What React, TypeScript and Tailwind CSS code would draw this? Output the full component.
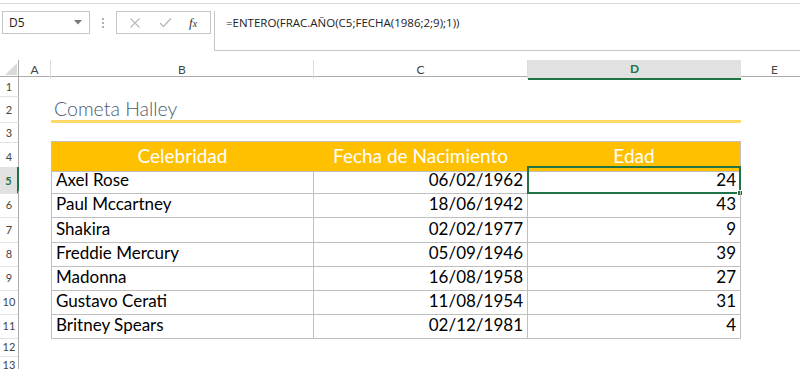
import React from "react";

const COLS = "grid-cols-[19px_32px_263px_214px_213px_1fr]";

const data: [string, string, string][] = [
  ["Axel Rose", "06/02/1962", "24"],
  ["Paul Mccartney", "18/06/1942", "43"],
  ["Shakira", "02/02/1977", "9"],
  ["Freddie Mercury", "05/09/1946", "39"],
  ["Madonna", "16/08/1958", "27"],
  ["Gustavo Cerati", "11/08/1954", "31"],
  ["Britney Spears", "02/12/1981", "4"],
];

const rowH = ["h-[24px]", "h-[25px]", "h-[24px]", "h-[24px]", "h-[24px]", "h-[24px]", "h-[25px]"];

function RowHead({ n, active }: { n: number; active?: boolean }) {
  return (
    <div
      className={
        "flex items-center justify-center pt-[2px] text-[11px] border-b border-b-[#e3e3e3] " +
        (active
          ? "bg-[#e1e1e1] text-[#217346] font-bold border-r-2 border-r-[#217346]"
          : "text-[#444] border-r border-r-[#ababab]")
      }
    >
      {n}
    </div>
  );
}

export default function App() {
  return (
    <div className="w-[800px] h-[369px] overflow-hidden bg-white relative font-['Lato',sans-serif] text-black">
      {/* formula bar */}
      <div className="h-[60px] pt-[3px]">
        <div className="h-[48px] border-t border-[#d8d8d8] flex items-start pt-[7px]">
          <div className="ml-[2px] w-[88px] h-[23px] border border-[#c6c6c6] flex items-center justify-between pl-[6px] pr-[7px] font-['Open_Sans',sans-serif] text-[12px] text-[#222]">
            <span>D5</span>
            <svg width="8" height="5" viewBox="0 0 8 5">
              <path d="M0 0 L8 0 L4 4.5 Z" fill="#777" />
            </svg>
          </div>
          <div className="w-[26px] h-[23px] flex flex-col items-center justify-center gap-[2px]">
            <span className="w-[2px] h-[2px] bg-[#b0b0b0]" />
            <span className="w-[2px] h-[2px] bg-[#b0b0b0]" />
            <span className="w-[2px] h-[2px] bg-[#b0b0b0]" />
          </div>
          <div className="w-[95px] h-[23px] border border-[#c6c6c6] flex items-center">
            <svg width="12" height="12" viewBox="0 0 12 12" className="ml-[12px]">
              <path d="M1.5 1.5 L10.5 10.5 M10.5 1.5 L1.5 10.5" stroke="#b8b8b8" strokeWidth="1.1" />
            </svg>
            <svg width="13" height="11" viewBox="0 0 13 11" className="ml-[18px]">
              <path d="M1 6 L4.5 9.5 L12 1.5" stroke="#b8b8b8" strokeWidth="1.3" fill="none" />
            </svg>
            <span className="ml-[17px] font-['Liberation_Serif',serif] italic text-[13px] text-[#333] leading-none">
              f<span className="text-[10px]">x</span>
            </span>
          </div>
          <div className="ml-[3px] flex-1 h-[40px] border-l border-b border-[#c6c6c6] pl-[11px] pt-[3px] font-['Open_Sans',sans-serif] text-[11.5px] text-[#222]">
            =ENTERO(FRAC.AÑO(C5;FECHA(1986;2;9);1))
          </div>
        </div>
      </div>

      {/* column headers */}
      <div className={"grid h-[17px] border-b border-[#ababab] text-[12px] text-[#444] " + COLS}>
        <div className="border-r border-[#ababab] relative">
          <svg width="12" height="12" viewBox="0 0 12 12" className="absolute left-[5px] top-[3px]">
            <path d="M12 0 L12 12 L0 12 Z" fill="#dadada" />
          </svg>
        </div>
        <div className="flex items-center justify-center border-r border-[#dcdcdc]">A</div>
        <div className="flex items-center justify-center border-r border-[#dcdcdc]">B</div>
        <div className="flex items-center justify-center border-r border-[#dcdcdc]">C</div>
        <div className="flex items-center justify-center bg-[#e1e1e1] text-[#217346] font-bold border-b-2 border-[#217346] -mb-px">D</div>
        <div className="flex items-center pl-[30px]">E</div>
      </div>

      {/* row 1 */}
      <div className={"grid h-[20px] " + COLS}>
        <RowHead n={1} />
      </div>
      {/* row 2 title */}
      <div className={"grid h-[26px] " + COLS}>
        <RowHead n={2} />
        <div />
        <div className="col-span-3 border-b-[3px] border-[#ffd966] flex items-end pl-[3px] pb-[2px] text-[19.5px] text-[#4a5a70] leading-none font-light">
          Cometa Halley
        </div>
      </div>
      {/* row 3 */}
      <div className={"grid h-[18px] " + COLS}>
        <RowHead n={3} />
      </div>
      {/* row 4 header */}
      <div className={"grid h-[26px] " + COLS}>
        <RowHead n={4} />
        <div />
        <div className="bg-[#ffc000] border border-[#bfbfbf] text-white text-[19px] flex items-center justify-center">Celebridad</div>
        <div className="bg-[#ffc000] border-y border-r border-[#bfbfbf] text-white text-[19px] flex items-center justify-center">Fecha de Nacimiento</div>
        <div className="bg-[#ffc000] border-y border-r border-[#bfbfbf] text-white text-[19px] flex items-center justify-center">Edad</div>
      </div>
      {data.map((r, i) => (
        <div key={i} className={"grid " + rowH[i] + " " + COLS}>
          <RowHead n={i + 5} active={i === 0} />
          <div />
          <div className="border-l border-r border-b border-[#bfbfbf] flex items-center pl-[4px] text-[17px]">{r[0]}</div>
          <div className="border-r border-b border-[#bfbfbf] flex items-center justify-end pr-[4px] text-[17px]">{r[1]}</div>
          <div className="border-r border-b border-[#bfbfbf] flex items-center justify-end pr-[4px] text-[17px] relative">
            {r[2]}
            {i === 0 && (
              <div className="absolute -left-[1px] -top-[1px] -right-[1px] -bottom-[1px] border-2 border-[#217346]">
                <div className="absolute -right-[4px] -bottom-[4px] w-[6px] h-[6px] bg-[#217346] border border-white" />
              </div>
            )}
          </div>
        </div>
      ))}
      <div className={"grid h-[18px] " + COLS}>
        <RowHead n={12} />
      </div>
      <div className={"grid h-[18px] " + COLS}>
        <RowHead n={13} />
      </div>
    </div>
  );
}
